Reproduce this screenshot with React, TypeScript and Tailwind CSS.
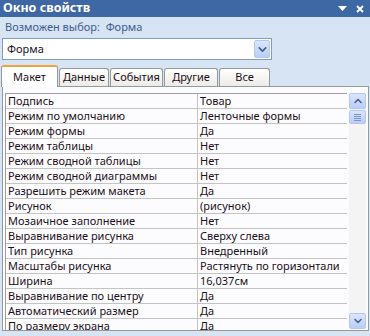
import { ChevronDown, ChevronUp } from 'lucide-react';

const rows: [string, string][] = [
  ['Подпись', 'Товар'],
  ['Режим по умолчанию', 'Ленточные формы'],
  ['Режим формы', 'Да'],
  ['Режим таблицы', 'Нет'],
  ['Режим сводной таблицы', 'Нет'],
  ['Режим сводной диаграммы', 'Нет'],
  ['Разрешить режим макета', 'Да'],
  ['Рисунок', '(рисунок)'],
  ['Мозаичное заполнение', 'Нет'],
  ['Выравнивание рисунка', 'Сверху слева'],
  ['Тип рисунка', 'Внедренный'],
  ['Масштабы рисунка', 'Растянуть по горизонтали'],
  ['Ширина', '16,037см'],
  ['Выравнивание по центру', 'Да'],
  ['Автоматический размер', 'Да'],
  ['По размеру экрана', 'Да'],
];

const tabs = [
  { label: 'Данные', w: 'w-[50px]' },
  { label: 'События', w: 'w-[53px]' },
  { label: 'Другие', w: 'w-[54px]' },
  { label: 'Все', w: 'w-[51px]' },
];

function BlueButton({ children, className }: { children: React.ReactNode; className?: string }) {
  return (
    <div
      className={`flex items-center justify-center rounded-[2px] border border-[#b3c7ef] bg-gradient-to-b from-[#dbe6fd] to-[#b9cdf9] text-[#4d6185] ${className ?? ''}`}
    >
      {children}
    </div>
  );
}

export default function App() {
  return (
    <div className="flex h-[336px] w-[370px] flex-col overflow-hidden bg-[#d6e4f4] font-['Noto_Sans',sans-serif] text-[11px] text-[#1c1020]">
      {/* title bar */}
      <div className="flex h-[17px] items-center justify-between bg-[#3e68a3] pl-[3px] pr-[6px]">
        <span className="text-[12.5px] font-bold leading-none text-white">Окно свойств</span>
        <div className="flex items-center gap-[9px]">
          <svg width="9" height="5" viewBox="0 0 9 5">
            <path d="M0 0h9L4.5 5z" fill="#fff" />
          </svg>
          <svg width="8" height="8" viewBox="0 0 8 8">
            <path d="M1 1l6 6M7 1L1 7" stroke="#fff" strokeWidth="1.8" />
          </svg>
        </div>
      </div>

      {/* selection type */}
      <div className="flex h-[21px] items-center px-[5px] text-[#3f5c8c]">
        Возможен выбор:&nbsp;&nbsp;Форма
      </div>

      {/* object dropdown */}
      <div className="mx-[2px] flex h-[22px] w-[270px] items-center justify-between border border-[#7f9db9] bg-white pl-[4px] pr-[1px]">
        <span>Форма</span>
        <BlueButton className="h-[18px] w-[16px]">
          <ChevronDown size={13} strokeWidth={3.2} />
        </BlueButton>
      </div>

      {/* tabs */}
      <div className="relative z-10 mt-[5px] flex items-end pl-[1px]">
        <div className="mb-[-1px] flex h-[22px] w-[57px] items-center justify-center rounded-t-[3px] border border-b-0 border-[#919b9c] border-t-[#f1a43a] border-t-2 bg-white">
          Макет
        </div>
        {tabs.map((t) => (
          <div
            key={t.label}
            className={`ml-[1px] flex h-[18px] ${t.w} items-center justify-center rounded-t-[3px] border border-b-0 border-[#919b9c] bg-gradient-to-b from-white to-[#ecebe6]`}
          >
            {t.label}
          </div>
        ))}
      </div>

      {/* property grid panel */}
      <div className="mb-[5px] ml-[2px] flex w-[367px] flex-1 gap-[2px] overflow-hidden border border-[#919b9c] bg-[#fcfcfe] pl-[2px] pr-[2px] pt-[6px]">
        <div className="flex-1 overflow-hidden border-l border-t border-[#a0a0a0]">
          {rows.map(([k, v]) => (
            <div key={k} className="flex h-[15px] border-b border-[#c4c4c4] leading-[14px]">
              <div className="w-[192px] shrink-0 border-r border-[#c4c4c4] pl-[2px]">{k}</div>
              <div className="flex-1 pl-[2px]">{v}</div>
            </div>
          ))}
        </div>
        <div className="mb-[1px] flex w-[17px] flex-col bg-[#f4f4f4]">
          <BlueButton className="h-[16px] w-[17px]">
            <ChevronUp size={12} strokeWidth={3.2} />
          </BlueButton>
          <BlueButton className="mt-[1px] h-[14px] w-[17px] flex-col gap-[1px]">
            <div className="h-px w-[7px] bg-[#7d93bf]" />
            <div className="h-px w-[7px] bg-[#7d93bf]" />
            <div className="h-px w-[7px] bg-[#7d93bf]" />
            <div className="h-px w-[7px] bg-[#7d93bf]" />
          </BlueButton>
          <div className="flex-1" />
          <BlueButton className="h-[16px] w-[17px]">
            <ChevronDown size={12} strokeWidth={3.2} />
          </BlueButton>
        </div>
      </div>
    </div>
  );
}
